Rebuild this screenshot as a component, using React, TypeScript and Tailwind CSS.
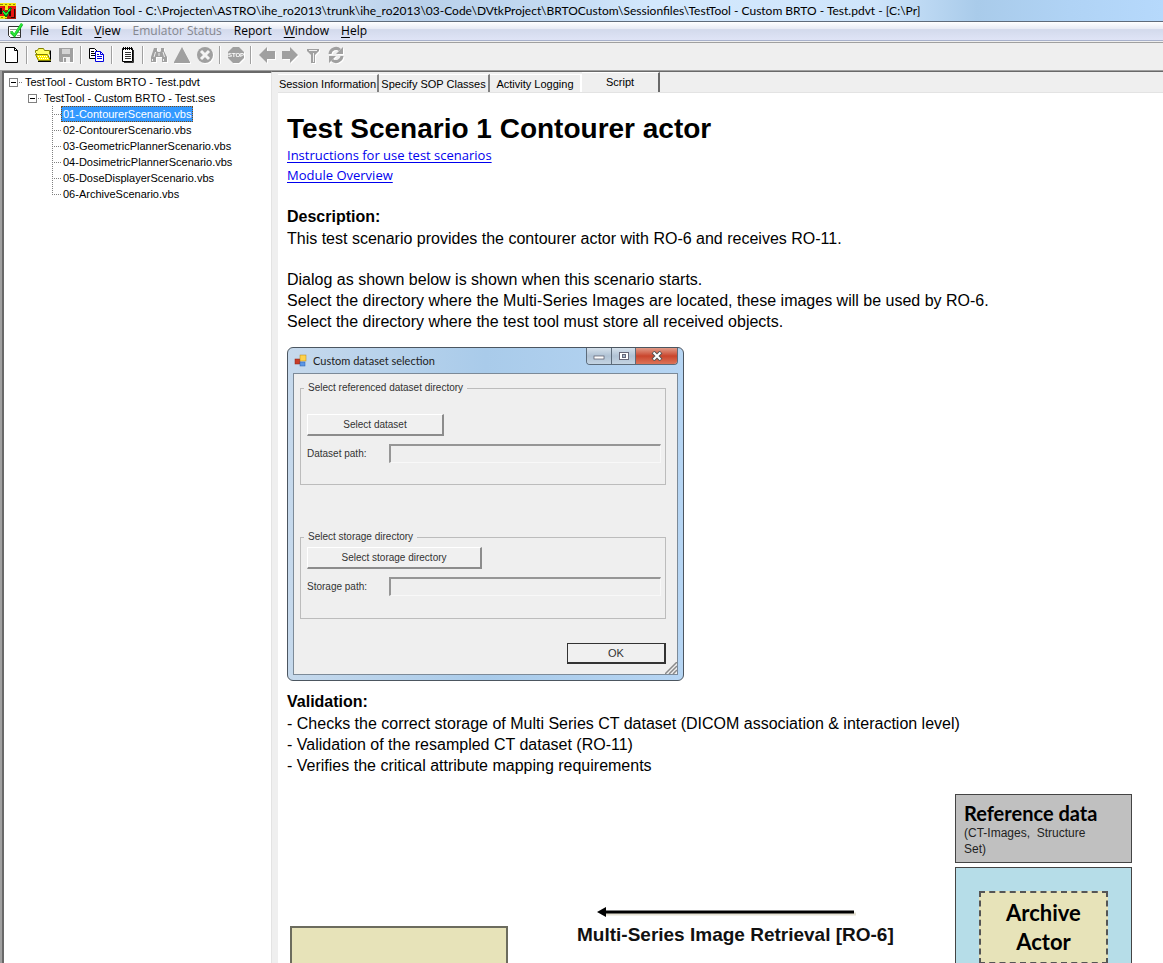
import type { ReactNode } from "react";

const uiFont = "font-['Open_Sans','Noto_Sans',sans-serif]";
const titleFont = "font-['Lato','Open_Sans',sans-serif]";
const sysFont = "font-['Liberation_Sans',Arial,sans-serif]";

function AppIcon() {
  return (
    <svg width="16" height="16" viewBox="0 0 16 16" shapeRendering="crispEdges" aria-hidden="true">
      <rect width="16" height="16" fill="#b01808" />
      <path d="M0 0h16v3H0zM5 3h3v4H5zM0 13h7v3H0z" fill="#f4e812" />
      <path d="M0 1h3M5 1h2M9 1h2M13 1h2M1 14h2M5 15h2" stroke="#8a8a00" />
      <path d="M0 3h4v2h1v8H0zM8 3h8v3h-2v8h-3V6H8z" fill="#ea1410" />
      <path d="M0 5h2v6H0zM9 6h2v7H9zM14 6h1v9h-4v-1h3z" fill="#2a0a04" />
      <path d="M2 8l2-1 2 3 4-6 2 1-5 9H5z" fill="#0a7a14" />
      <path d="M3 7l3 4 4-6v2l-4 6-3-4z" fill="#28e838" />
    </svg>
  );
}

function DocIcon() {
  return (
    <svg width="17" height="16" viewBox="0 0 17 16" aria-hidden="true">
      <path d="M1.500 3.500h12v11h-10l-2-2z" fill="#fff" stroke="#333" />
      <path d="M3 6.500h7M3 8.500h3M4 10.500h2M11 9.500h2M10 12.500h3" stroke="#999" />
      <path d="M4 9l3.500 3.500L15 1" fill="none" stroke="#12b822" strokeWidth="3" />
      <path d="M4 8.500l3.500 3.500L15 0.500" fill="none" stroke="#2eea3c" strokeWidth="1.500" />
    </svg>
  );
}

function ToolButton({ label, disabled = false, children }: { label: string; disabled?: boolean; children: ReactNode }) {
  return (
    <button type="button" aria-label={label} disabled={disabled} className="flex h-[22px] w-[23px] items-center justify-center">
      <svg width="18" height="18" viewBox="0 0 18 18" className={disabled ? "drop-shadow-[1px_1px_0_#fff]" : ""} aria-hidden="true">
        {children}
      </svg>
    </button>
  );
}

function Separator() {
  return <div className="flex h-[18px] w-2 pl-[3px]"><div className="w-px bg-[#a0a0a0]" /><div className="w-px bg-white" /></div>;
}

const gray = "#a0a0a0";

function Toolbar() {
  return (
    <div className="mt-px flex h-7 shrink-0 items-center border-t border-[#a0a0a0] bg-[#efefef] pb-[3px]">
      <ToolButton label="New">
        <path d="M2.500 1.500h9l3 3v12h-12z" fill="#fff" stroke="#000" />
        <path d="M11.500 1.500v3h3" fill="none" stroke="#000" />
      </ToolButton>
      <Separator />
      <ToolButton label="Open">
        <path d="M3.500 8.500l-2-2v-2h2l1-2h5l1 2h5v4" fill="#ffff66" stroke="#808000" />
        <path d="M16.500 4.500v10" stroke="#000" />
        <path d="M1.500 8.500h12l3 6h-12z" fill="#ffee00" stroke="#808000" />
        <path d="M4 10.500h9M5 12.500h9" stroke="#fff" strokeDasharray="1 1" />
        <path d="M4 15.500h13" stroke="#000" />
      </ToolButton>
      <ToolButton label="Save" disabled>
        <path d="M2 2h14v14H3l-1-1z" fill={gray} />
        <path d="M5 3h8v5H5z" fill="#d4d4d4" />
        <path d="M6 11h7v5H6z" fill="#efefef" />
        <path d="M7 12h2v4H7z" fill={gray} />
      </ToolButton>
      <Separator />
      <ToolButton label="Copy">
        <path d="M1.500 2.500h5l3 3v7h-8z" fill="#fff" stroke="#000" />
        <path d="M3 5.500h3M3 7.500h5M3 9.500h5" stroke="#000" />
        <path d="M7.500 5.500h5l3 3v7h-8z" fill="#fff" stroke="#0000e0" />
        <path d="M12.500 5.500v3h3M9 8.500h2M9 10.500h5M9 12.500h5" fill="none" stroke="#0000e0" />
      </ToolButton>
      <Separator />
      <ToolButton label="Results">
        <path d="M3.500 2.500h10v13h-10z" fill="#fff" stroke="#000" />
        <path d="M14.500 4v12.500H5" fill="none" stroke="#333" />
        <path d="M4.500 1v3M6.500 1v3M8.500 1v3M10.500 1v3M12.500 1v3" stroke="#000" />
        <path d="M6 6.500h6M6 8.500h6M6 10.500h6M6 12.500h6" stroke="#333" />
      </ToolButton>
      <Separator />
      <ToolButton label="Find" disabled>
        <path d="M4 2h3v3l1 1h2l1-1V2h3v3l3 6v5h-5v-5H6v5H1v-5l2-6z" fill={gray} />
        <path d="M5.500 6L4 11M13 6l1.500 5M9 7v3M2.500 13v2M13.500 13v2" stroke="#efefef" />
      </ToolButton>
      <ToolButton label="Validate" disabled>
        <path d="M9 1l8 15v1H1v-1z" fill={gray} />
      </ToolButton>
      <ToolButton label="Clear" disabled>
        <circle cx="9" cy="9" r="8" fill={gray} />
        <path d="M5 5l8 8M13 5l-8 8" stroke="#f4f4f4" strokeWidth="3" />
      </ToolButton>
      <Separator />
      <ToolButton label="Stop" disabled>
        <path d="M6 1h6l5 5v6l-5 5H6l-5-5V6z" fill={gray} />
        <text x="9" y="11" textAnchor="middle" fontSize="6" fontFamily="Liberation Sans" fontWeight="bold" fill="#fff">STOP</text>
      </ToolButton>
      <Separator />
      <ToolButton label="Back" disabled>
        <path d="M1 9l8-8v4h8v8H9v4z" fill={gray} />
      </ToolButton>
      <ToolButton label="Forward" disabled>
        <path d="M17 9L9 1v4H1v8h8v4z" fill={gray} />
      </ToolButton>
      <ToolButton label="Filter" disabled>
        <path d="M3 3h12v2l-4 4v8H7V9L3 5z" fill={gray} />
        <path d="M5 4.500h8M9.500 7v9" stroke="#efefef" />
      </ToolButton>
      <ToolButton label="Refresh" disabled>
        <path d="M3 8a6 6 0 0 1 10-4M15 10a6 6 0 0 1-10 4" fill="none" stroke={gray} strokeWidth="3" />
        <path d="M16 1v7H9zM2 17v-7h7z" fill={gray} />
      </ToolButton>
    </div>
  );
}

const menus: { key: string; rest: string; disabled?: boolean; underline?: boolean }[] = [
  { key: "F", rest: "ile" },
  { key: "E", rest: "dit" },
  { key: "V", rest: "iew", underline: true },
  { key: "E", rest: "mulator Status", disabled: true },
  { key: "R", rest: "eport" },
  { key: "W", rest: "indow", underline: true },
  { key: "H", rest: "elp", underline: true },
];

const scenarios = [
  "01-ContourerScenario.vbs",
  "02-ContourerScenario.vbs",
  "03-GeometricPlannerScenario.vbs",
  "04-DosimetricPlannerScenario.vbs",
  "05-DoseDisplayerScenario.vbs",
  "06-ArchiveScenario.vbs",
];

function Toggle() {
  return (
    <button type="button" aria-label="Collapse" className="block h-4 w-4 shrink-0">
      <svg width="16" height="16" viewBox="0 0 16 16" aria-hidden="true">
        <rect x="0.500" y="4.500" width="8" height="8" fill="#fff" stroke="#808080" />
        <path d="M2 8.500h5" stroke="#000" />
        <path d="M10 8.500h4" stroke="#808080" strokeDasharray="1 1" />
      </svg>
    </button>
  );
}

function Branch({ last }: { last: boolean }) {
  return (
    <svg width="10" height="16" viewBox="0 0 10 16" className="shrink-0" aria-hidden="true">
      <path d={last ? "M0.500 0v9" : "M0.500 0v16"} stroke="#808080" strokeDasharray="1 1" />
      <path d="M0 8.500h9" stroke="#808080" strokeDasharray="1 1" />
    </svg>
  );
}

function Tree() {
  return (
    <nav aria-label="Session tree" className="w-[270px] shrink-0 border-t-2 border-r border-l-2 border-t-[#696969] border-r-[#e3e3e3] border-l-[#696969] bg-white pt-px text-[11px] leading-4 whitespace-nowrap text-black">
      <div className="flex h-4 pl-[5px]"><Toggle />TestTool - Custom BRTO - Test.pdvt</div>
      <div className="flex h-4 pl-6"><Toggle />TestTool - Custom BRTO - Test.ses</div>
      <ul>
        {scenarios.map((name, i) => (
          <li key={name} className="flex h-4 pl-12">
            <Branch last={i === scenarios.length - 1} />
            <span className={i === 0 ? "-ml-px bg-[#3399ff] px-0.5 text-white outline-1 -outline-offset-1 outline-dotted outline-[#7a4a10]" : "px-px"}>{name}</span>
          </li>
        ))}
      </ul>
    </nav>
  );
}

function Tabs() {
  const tab = "mt-0.5 h-[18px] border-t border-r-2 border-t-white bg-[#efefef] text-center whitespace-nowrap";
  return (
    <div role="tablist" className="flex h-5 bg-[#efefef] text-[11px] leading-[18px] text-black">
      <button type="button" role="tab" className={`${tab} w-[101px] border-r-[#808080]`}>Session Information</button>
      <button type="button" role="tab" className={`${tab} w-[111px] border-r-[#808080]`}>Specify SOP Classes</button>
      <button type="button" role="tab" className={`${tab} w-[92px] border-r-white`}>Activity Logging</button>
      <button type="button" role="tab" aria-selected="true" className="h-5 w-[78px] border-t border-r-2 border-t-white border-r-[#696969] bg-[#efefef] leading-[17px]">Script</button>
    </div>
  );
}

function PathField({ id, label }: { id: string; label: string }) {
  return (
    <div className="mt-2 flex items-center pl-[6px]">
      <label htmlFor={id} className="w-[82px]">{label}</label>
      <input id={id} readOnly className="mr-1 h-[19px] min-w-0 flex-1 border-t-2 border-r border-b border-l-2 border-t-[#969696] border-r-[#f8f8f8] border-b-[#f8f8f8] border-l-[#969696] bg-[#efefef] px-1" />
    </div>
  );
}

function DatasetDialog() {
  const button = "block h-[22px] border-t border-r-2 border-b-2 border-l border-t-white border-r-[#8c8c8c] border-b-[#8c8c8c] border-l-white bg-[#f0f0f0]";
  return (
    <section aria-label="Custom dataset selection" className="flex h-[334px] w-[397px] flex-col rounded-[6px] border border-[#4c5660] bg-linear-to-r from-[#c6d9ec] via-[#a9cbea] to-[#b6d5f3] px-[5px] pb-[5px] text-[10px] leading-3 text-[#333]">
      <div className="flex h-[25px] shrink-0 items-start">
        <div className="flex items-center gap-1 pt-[5px]">
          <svg width="16" height="14" viewBox="0 0 16 14" aria-hidden="true">
            <rect x="2" y="5" width="5" height="5" fill="#c83c28" stroke="#8c2010" strokeWidth="0.500" />
            <rect x="7" y="1" width="6" height="6" fill="#ffd24a" stroke="#b88410" strokeWidth="0.500" />
            <rect x="7" y="8" width="5" height="4" fill="#5a96e6" stroke="#2c5ca8" strokeWidth="0.500" />
          </svg>
          <h2 className={`${titleFont} text-[11px] leading-4 text-[#222]`}>Custom dataset selection</h2>
        </div>
        <div className="ml-auto flex h-[17px] overflow-hidden rounded-b-[4px] border border-t-0 border-[#5c6b7a]">
          <button type="button" aria-label="Minimize" className="flex w-[25px] items-center justify-center border-r border-[#5c6b7a] bg-linear-to-b from-[#d5e1ec] via-[#b0c2d4] to-[#c4d4e2]">
            <svg width="12" height="10" aria-hidden="true"><rect x="1" y="5" width="10" height="3" fill="#fff" stroke="#556" strokeWidth="0.700" /></svg>
          </button>
          <button type="button" aria-label="Maximize" className="flex w-[24px] items-center justify-center border-r border-[#5c6b7a] bg-linear-to-b from-[#d5e1ec] via-[#b0c2d4] to-[#c4d4e2]">
            <svg width="12" height="10" aria-hidden="true"><rect x="1.500" y="1.500" width="9" height="7" fill="#fff" stroke="#667" /><rect x="4.500" y="3.500" width="3" height="3" fill="#a8bacb" stroke="#667" /></svg>
          </button>
          <button type="button" aria-label="Close" className="flex w-[41px] items-center justify-center bg-linear-to-b from-[#e09a88] via-[#c9452c] to-[#dc7358]">
            <svg width="12" height="10" aria-hidden="true"><path d="M2 1l8 8M10 1l-8 8" stroke="#555" strokeWidth="4" /><path d="M2.500 1.500l7 7M9.500 1.500l-7 7" stroke="#fff" strokeWidth="2" /></svg>
          </button>
        </div>
      </div>
      <div className="relative flex flex-1 flex-col border border-[#7c8a98] bg-[#efefef] pt-2 pr-[11px] pl-[6px]">
        <fieldset className="h-[103px] border border-[#bcbcbc]">
          <legend className="ml-[3px] px-1">Select referenced dataset directory</legend>
          <button type="button" className={`${button} mt-5 ml-[6px] w-[137px]`}>Select dataset</button>
          <PathField id="dataset-path" label="Dataset path:" />
        </fieldset>
        <fieldset className="mt-[46px] h-[88px] border border-[#bcbcbc]">
          <legend className="ml-[3px] px-1">Select storage directory</legend>
          <button type="button" className={`${button} mt-1 ml-[6px] w-[175px]`}>Select storage directory</button>
          <PathField id="storage-path" label="Storage path:" />
        </fieldset>
        <button type="button" className="mt-6 ml-auto h-[21px] w-[99px] border border-r-2 border-b-2 border-[#333] bg-[#f0f0f0] text-[11px]">OK</button>
        <svg width="12" height="12" viewBox="0 0 12 12" className="absolute right-0 bottom-0" aria-hidden="true">
          <path d="M0 12L12 0M4 12l8-8M8 12l4-4" stroke="#8a8a8a" strokeWidth="1.500" />
        </svg>
      </div>
    </section>
  );
}

function Diagram() {
  return (
    <div className="relative mt-[18px] h-[200px] min-w-[850px] overflow-hidden text-black">
      <div className="absolute top-[132px] left-[3px] h-[60px] w-[218px] border-2 border-[#6c6c5e] bg-[#e7e3b9]" />
      <svg width="260" height="14" viewBox="0 0 260 14" className="absolute top-[111px] left-[309px]" aria-hidden="true">
        <path d="M9 9h251" stroke="#e6e2d4" strokeWidth="3" />
        <path d="M8 7h250" stroke="#000" strokeWidth="3" />
        <path d="M1 7l9-5v10z" fill="#000" />
      </svg>
      <p className="absolute top-[129px] left-[290px] text-[19px] leading-6 font-bold whitespace-nowrap text-[#111]">Multi-Series Image Retrieval [RO-6]</p>
      <div className="absolute top-0 left-[668px] h-[69px] w-[177px] border border-[#444] bg-[#c0c0c0] px-2 pt-[6px] text-[12px] leading-4 text-[#222]">
        <strong className="block font-['Lato','Open_Sans',sans-serif] text-[20px] leading-6 font-bold text-black">Reference data</strong>
        (CT-Images,&nbsp; Structure<br />Set)
      </div>
      <div className="absolute top-[73px] left-[668px] h-[110px] w-[177px] border border-[#444] bg-[#b6dde8] px-[23px] pt-[23px]">
        <div className="h-[73px] border-2 border-dashed border-[#555] bg-[#e7e3b9] pt-[5px] text-center font-['Lato','Open_Sans',sans-serif] text-[22px] leading-[29px] font-bold">
          Archive<br />Actor
        </div>
      </div>
    </div>
  );
}

export default function App() {
  return (
    <div className={`${sysFont} flex h-screen flex-col overflow-hidden bg-[#efefef]`}>
      <header className="flex h-[22px] shrink-0 items-center gap-[5px] border-b border-[#5f6b7a] bg-[linear-gradient(90deg,#dbe9f7_0%,#d3e4f5_25%,#b9d0ea_36%,#c3daf2_48%,#d3e8fd_56%,#cfe5fb_75%,#a9cbea_84%,#b0d3f5_92%,#b6d9fc_100%)] text-black">
        <AppIcon />
        <h1 className={`${titleFont} text-[12px] leading-5 whitespace-nowrap`}>
          Dicom Validation Tool - C:\Projecten\ASTRO\ihe_ro2013\trunk\ihe_ro2013\03-Code\DVtkProject\BRTOCustom\Sessionfiles\TestTool - Custom BRTO - Test.pdvt - [C:\Pr]
        </h1>
      </header>
      <nav aria-label="Main menu" className={`${uiFont} flex h-[19px] shrink-0 items-center border-b border-[#a9b2cc] bg-[linear-gradient(180deg,#ffffff_0%,#e8ebf5_38%,#d3daec_42%,#dfe4f6_100%)] pl-[7px] text-[12px] leading-4 whitespace-nowrap text-black`}>
        <DocIcon />
        <div className="flex gap-3 pl-[6px]">
          {menus.map((m) => (
            <button key={m.key + m.rest} type="button" disabled={m.disabled} className={m.disabled ? "text-[#85878e]" : ""}>
              <span className={m.underline ? "underline underline-offset-2" : ""}>{m.key}</span>{m.rest}
            </button>
          ))}
        </div>
      </nav>
      <Toolbar />
      <div className="flex min-h-0 flex-1 border-t border-l-2 border-[#a0a0a0]">
        <Tree />
        <div className="flex min-w-0 flex-1 flex-col border-t border-[#696969] pl-[6px]">
          <Tabs />
          <main className="min-h-0 flex-1 overflow-hidden border-t border-[#e3e3e3] bg-white pt-[19px] pl-[9px] text-[16px] leading-[21px] text-black">
            <h2 className="text-[28px] leading-[33px] font-bold">Test Scenario 1 Contourer actor</h2>
            <div className={`${uiFont} flex flex-col items-start text-[13px] leading-5 text-[#0000ee]`}>
              <a href="#instructions" className="underline underline-offset-2">Instructions for use test scenarios</a>
              <a href="#modules" className="underline underline-offset-2">Module Overview</a>
            </div>
            <h3 className="mt-[21px] leading-[22px] font-bold">Description:</h3>
            <p>This test scenario provides the contourer actor with RO-6 and receives RO-11.</p>
            <p className="mt-5">
              Dialog as shown below is shown when this scenario starts.<br />
              Select the directory where the Multi-Series Images are located, these images will be used by RO-6.<br />
              Select the directory where the test tool must store all received objects.
            </p>
            <div className="mt-[15px] mb-[10px]">
              <DatasetDialog />
            </div>
            <h3 className="leading-[22px] font-bold">Validation:</h3>
            <ul>
              <li>- Checks the correct storage of Multi Series CT dataset (DICOM association &amp; interaction level)</li>
              <li>- Validation of the resampled CT dataset (RO-11)</li>
              <li>- Verifies the critical attribute mapping requirements</li>
            </ul>
            <Diagram />
          </main>
        </div>
      </div>
    </div>
  );
}
